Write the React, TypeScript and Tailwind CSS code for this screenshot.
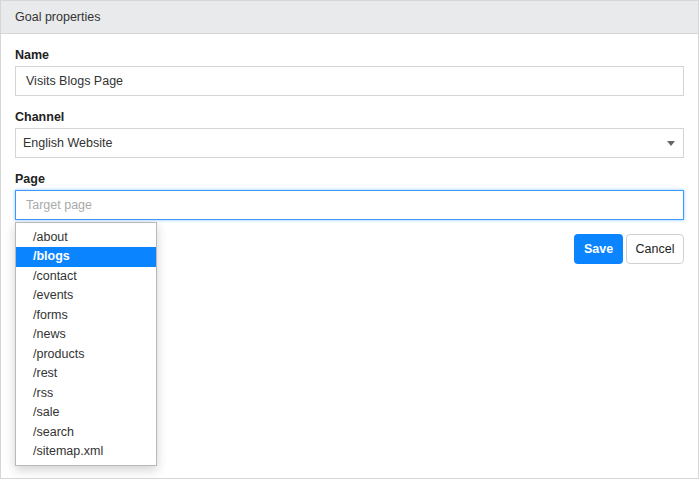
import React from "react";

const PAGES = ["/about", "/blogs", "/contact", "/events", "/forms", "/news", "/products", "/rest", "/rss", "/sale", "/search", "/sitemap.xml"];

const App: React.FC = () => {
  const selected = "/blogs";

  return (
    <div className="w-[699px] h-[479px] border border-[#d6d6d6] bg-white text-[12.5px] text-[#333] font-['Liberation_Sans',Arial,sans-serif]">
      <div className="h-[33px] flex items-center px-[14px] bg-[#e9eaec] border-b border-[#d6d6d6]">Goal properties</div>

      <div className="px-[14px] pt-[13px]">
        <label className="block h-4 leading-4 font-bold text-[#222] mb-[3px]">Name</label>
        <div className="h-[30px] border border-[#d4d4d4] flex items-center px-[10px] mb-[13px]">Visits Blogs Page</div>

        <label className="block h-4 leading-4 font-bold text-[#222] mb-[3px]">Channel</label>
        <div className="h-[30px] border border-[#d4d4d4] flex items-center justify-between pl-[7px] pr-[8px] mb-[13px]">
          <span>English Website</span>
          <svg width="8" height="5" viewBox="0 0 8 5">
            <path d="M0 0h8L4 5z" fill="#666" />
          </svg>
        </div>

        <label className="block h-4 leading-4 font-bold text-[#222] mb-[3px]">Page</label>
        <div className="relative">
          <div className="h-[30px] border border-[#3d9bff] shadow-[0_0_3px_#8cc4ff] flex items-center px-[10px] text-[#aaa]">Target page</div>

          <div className="absolute left-0 top-[32px] w-[142px] bg-white border border-[#b8b8b8] shadow-[0_4px_10px_rgba(0,0,0,0.18)] pt-[4.5px] pb-[3.5px] z-10">
            {PAGES.map((p) => (
              <div
                key={p}
                className={`h-[19.5px] leading-[19.5px] pl-[17px] ${p === selected ? "bg-[#0a84ff] text-white font-bold" : "text-[#333]"}`}
              >
                {p}
              </div>
            ))}
          </div>

          <div className="flex justify-end gap-[3px] mt-[14px]">
            <button className="h-[30px] w-[49px] rounded-[4px] bg-[#0a84ff] text-white font-bold">Save</button>
            <button className="h-[30px] w-[58px] rounded-[4px] border border-[#d0d0d0] bg-white text-[#222]">Cancel</button>
          </div>
        </div>
      </div>
    </div>
  );
};

export default App;
